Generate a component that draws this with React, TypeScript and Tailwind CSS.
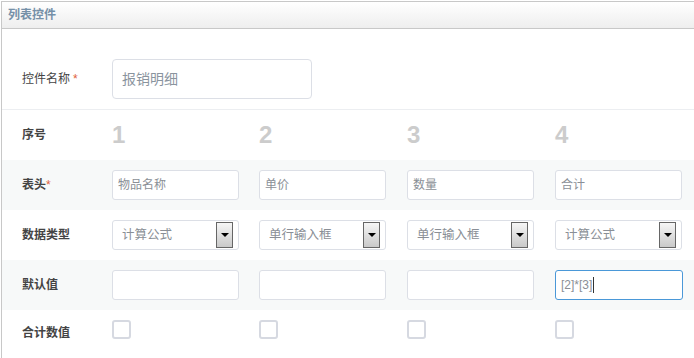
import React from 'react';

const cols = [
  { head: '物品名称', type: '计算公式', value: '' },
  { head: '单价', type: '单行输入框', value: '' },
  { head: '数量', type: '单行输入框', value: '' },
  { head: '合计', type: '计算公式', value: '[2]*[3]' },
];

const font = { fontFamily: '"Liberation Sans", "Noto Sans CJK SC", sans-serif' };

const Label: React.FC<{ text: string; required?: boolean }> = ({ text, required }) => (
  <div className="pl-[20px] text-[12px] font-bold text-[#444]">
    {text}
    {required && <span className="text-[#e0603a] font-normal">*</span>}
  </div>
);

const SelectBox: React.FC<{ value: string }> = ({ value }) => (
  <div className="w-[127px] h-[30px] border border-[#dcdfe6] rounded-[3px] bg-white flex items-center justify-between pl-[9px] pr-[5px]">
    <span className="text-[12.5px] text-[#8a8f96]">{value}</span>
    <div className="w-[17px] h-[26px] border border-[#666] bg-gradient-to-b from-[#f6f6f6] to-[#c9c9c9] flex items-center justify-center">
      <div className="w-0 h-0 border-l-[4px] border-r-[4px] border-t-[4px] border-l-transparent border-r-transparent border-t-black" />
    </div>
  </div>
);

export default function App() {
  return (
    <div className="w-[694px] h-[358px] bg-white overflow-hidden" style={font}>
      <div className="mt-px ml-px border-l border-t border-[#c8c8c8] h-[357px]">
        <div className="h-[27px] border-b border-[#c8c8c8] bg-gradient-to-b from-white to-[#eeeeee] flex items-center pl-[6px]">
          <span className="text-[12px] font-bold text-[#7590a8]">列表控件</span>
        </div>

        <div className="h-[81px] border-b border-[#eceef1] grid grid-cols-[110px_1fr] items-end pb-[10px]">
          <div className="pl-[20px] text-[12px] text-[#444] h-[40px] flex items-center">
            控件名称 <span className="text-[#e0603a] ml-[3px]">*</span>
          </div>
          <div className="w-[200px] h-[40px] border border-[#dcdfe6] rounded-[4px] flex items-center pl-[9px] text-[14px] text-[#8a949e]">
            报销明细
          </div>
        </div>

        <div className="h-[50px] grid grid-cols-[110px_147px_148px_148px_1fr] items-center">
          <Label text="序号" />
          {['1', '2', '3', '4'].map((n) => (
            <div key={n} className="text-[24px] font-bold text-[#cccccc] leading-none">{n}</div>
          ))}
        </div>

        <div className="h-[50px] bg-[#f7f9f9] grid grid-cols-[110px_147px_148px_148px_1fr] items-center">
          <Label text="表头" required />
          {cols.map((c) => (
            <div key={c.head} className="w-[127px] h-[30px] border border-[#dcdfe6] rounded-[3px] bg-white flex items-center pl-[5px] text-[12px] text-[#8a8f96]">
              {c.head}
            </div>
          ))}
        </div>

        <div className="h-[50px] grid grid-cols-[110px_147px_148px_148px_1fr] items-center">
          <Label text="数据类型" />
          {cols.map((c, i) => (
            <SelectBox key={i} value={c.type} />
          ))}
        </div>

        <div className="h-[50px] bg-[#f7f9f9] grid grid-cols-[110px_147px_148px_148px_1fr] items-center">
          <Label text="默认值" />
          {cols.map((c, i) =>
            c.value ? (
              <div key={i} className="w-[128px] h-[30px] border border-[#4a98d8] rounded-[3px] bg-white flex items-center pl-[5px] text-[12px] text-[#8a8f96]">
                {c.value}
                <span className="w-px h-[16px] bg-[#333] ml-px" />
              </div>
            ) : (
              <div key={i} className="w-[127px] h-[30px] border border-[#dcdfe6] rounded-[3px] bg-white" />
            )
          )}
        </div>

        <div className="h-[48px] grid grid-cols-[110px_147px_148px_148px_1fr] items-start">
          <div className="pt-[14px]">
            <Label text="合计数值" />
          </div>
          {cols.map((_, i) => (
            <div key={i} className="mt-[10px] w-[19px] h-[19px] border-2 border-[#d6d9e1] rounded-[3px] bg-white" />
          ))}
        </div>
      </div>
    </div>
  );
}
